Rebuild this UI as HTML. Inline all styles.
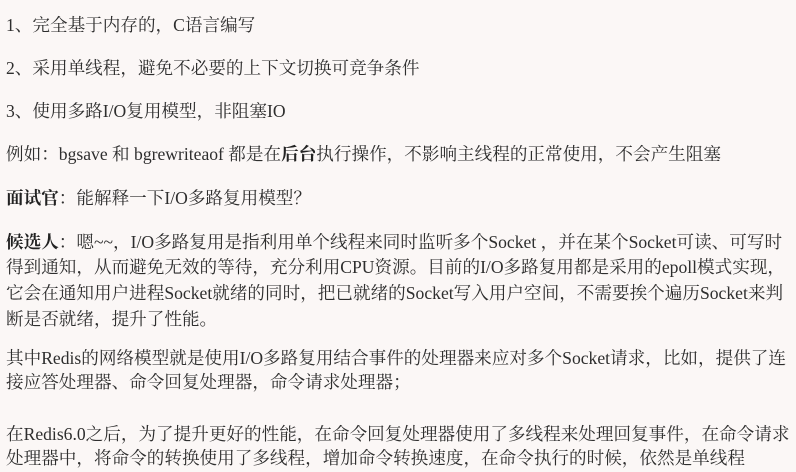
<!DOCTYPE html>
<html><head><meta charset="utf-8"><style>
html,body{margin:0;padding:0;width:796px;height:472px;overflow:hidden;background:#fbf7f6;}
body{font-family:"Liberation Serif","Noto Serif CJK SC",serif;color:#2e2e2e;font-size:17.6px;}
.l{position:absolute;left:6px;white-space:nowrap;line-height:20px;}
b{font-weight:bold;color:#222}
</style></head><body>
<div class="l" style="top:15px">1、完全基于内存的，C语言编写</div>
<div class="l" style="top:58px">2、采用单线程，避免不必要的上下文切换可竞争条件</div>
<div class="l" style="top:101px">3、使用多路I/O复用模型，非阻塞IO</div>
<div class="l" style="top:144px">例如：bgsave 和 bgrewriteaof 都是在<b>后台</b>执行操作，不影响主线程的正常使用，不会产生阻塞</div>
<div class="l" style="top:188px"><b>面试官</b>：能解释一下I/O多路复用模型？</div>
<div class="l" style="top:232px"><b>候选人</b>：嗯~~，I/O多路复用是指利用单个线程来同时监听多个Socket ，并在某个Socket可读、可写时</div>
<div class="l" style="top:257px">得到通知，从而避免无效的等待，充分利用CPU资源。目前的I/O多路复用都是采用的epoll模式实现，</div>
<div class="l" style="top:283px">它会在通知用户进程Socket就绪的同时，把已就绪的Socket写入用户空间，不需要挨个遍历Socket来判</div>
<div class="l" style="top:309px">断是否就绪，提升了性能。</div>
<div class="l" style="top:348px">其中Redis的网络模型就是使用I/O多路复用结合事件的处理器来应对多个Socket请求，比如，提供了连</div>
<div class="l" style="top:372px">接应答处理器、命令回复处理器，命令请求处理器；</div>
<div class="l" style="top:424px">在Redis6.0之后，为了提升更好的性能，在命令回复处理器使用了多线程来处理回复事件，在命令请求</div>
<div class="l" style="top:448px">处理器中，将命令的转换使用了多线程，增加命令转换速度，在命令执行的时候，依然是单线程</div>
</body></html>
